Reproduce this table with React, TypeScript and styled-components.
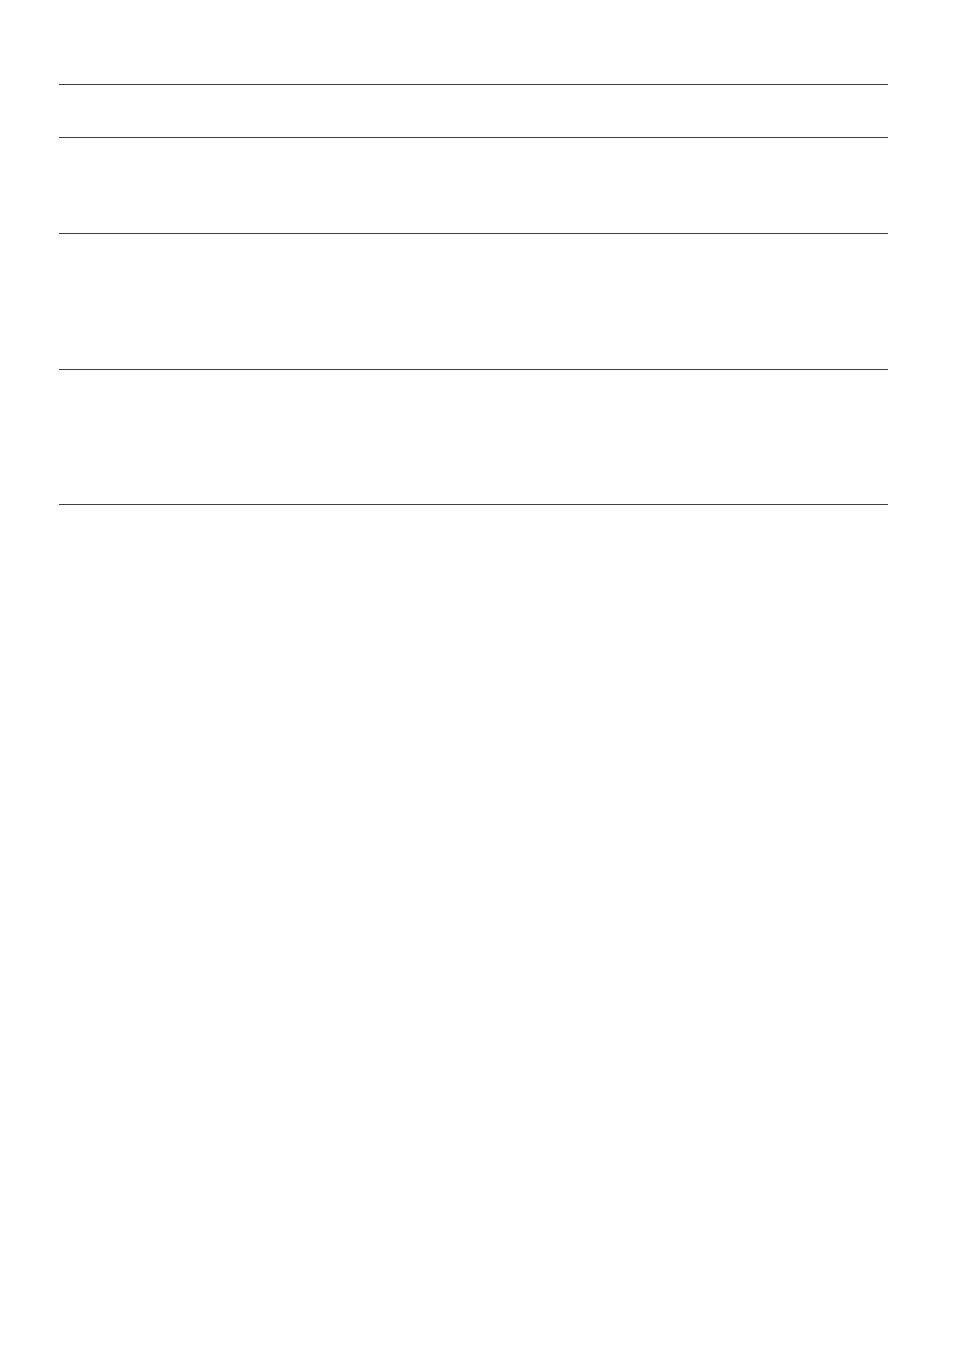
import styled, { createGlobalStyle } from "styled-components"

const GlobalStyle = createGlobalStyle`
  body {
    margin: 0;
    background: #ffffff;
    font-family: "Liberation Sans", Arial, sans-serif;
  }
`

const rows = [
  { id: "head", height: 52 },
  { id: "row-1", height: 95 },
  { id: "row-2", height: 135 },
  { id: "row-3", height: 134 },
]

export default function App() {
  return (
    <>
      <GlobalStyle />
      <Page>
        <Table>
          {rows.map((row) => (
            <Row key={row.id} $height={row.height} />
          ))}
        </Table>
      </Page>
    </>
  )
}

const Page = styled.div`
  padding: 84px 0 0 59px;
`

const Table = styled.div`
  display: flex;
  flex-direction: column;
  width: 829px;
  border-top: 1px solid #3f3f3f;
`

const Row = styled.div<{ $height: number }>`
  height: ${({ $height }) => $height}px;
  border-bottom: 1px solid #3f3f3f;
`
